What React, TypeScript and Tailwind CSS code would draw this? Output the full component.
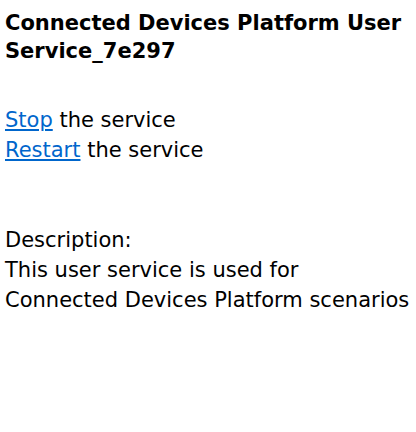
export default function App() {
  return (
    <div className="w-[416px] h-[432px] bg-white text-black px-[5px] pt-[9px] font-['DejaVu_Sans',sans-serif]">
      <h1 className="text-[21px] leading-[28px] font-bold whitespace-nowrap">
        Connected Devices Platform User
        <br />
        Service_7e297
      </h1>
      <div className="mt-[40px] text-[21px] leading-[30px]">
        <div>
          <a href="#" className="text-[#0066cc] underline">Stop</a> the service
        </div>
        <div>
          <a href="#" className="text-[#0066cc] underline">Restart</a> the service
        </div>
      </div>
      <div className="mt-[60px] text-[21px] leading-[30px]">
        <div>Description:</div>
        <div>This user service is used for</div>
        <div>Connected Devices Platform scenarios</div>
      </div>
    </div>
  );
}
